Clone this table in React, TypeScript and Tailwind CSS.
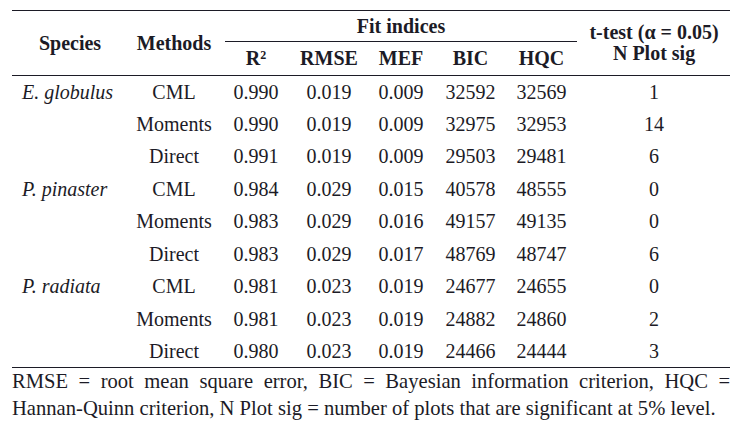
const rows = [
  { species: "E. globulus", method: "CML", r2: "0.990", rmse: "0.019", mef: "0.009", bic: "32592", hqc: "32569", sig: "1" },
  { species: "", method: "Moments", r2: "0.990", rmse: "0.019", mef: "0.009", bic: "32975", hqc: "32953", sig: "14" },
  { species: "", method: "Direct", r2: "0.991", rmse: "0.019", mef: "0.009", bic: "29503", hqc: "29481", sig: "6" },
  { species: "P. pinaster", method: "CML", r2: "0.984", rmse: "0.029", mef: "0.015", bic: "40578", hqc: "48555", sig: "0" },
  { species: "", method: "Moments", r2: "0.983", rmse: "0.029", mef: "0.016", bic: "49157", hqc: "49135", sig: "0" },
  { species: "", method: "Direct", r2: "0.983", rmse: "0.029", mef: "0.017", bic: "48769", hqc: "48747", sig: "6" },
  { species: "P. radiata", method: "CML", r2: "0.981", rmse: "0.023", mef: "0.019", bic: "24677", hqc: "24655", sig: "0" },
  { species: "", method: "Moments", r2: "0.981", rmse: "0.023", mef: "0.019", bic: "24882", hqc: "24860", sig: "2" },
  { species: "", method: "Direct", r2: "0.980", rmse: "0.023", mef: "0.019", bic: "24466", hqc: "24444", sig: "3" },
];

export default function App() {
  return (
    <div className="w-[743px] h-[429px] bg-white text-[#1c1b26] [font-family:'Liberation_Serif','Times_New_Roman',serif] text-[20px] overflow-hidden">
      <div className="ml-[12px] w-[718px] pt-[10px]">
        <table className="w-[718px] table-fixed border-collapse border-t border-b border-[#1c1b26]">
          <colgroup>
            <col className="w-[116px]" />
            <col className="w-[92px]" />
            <col className="w-[72px]" />
            <col className="w-[74px]" />
            <col className="w-[70px]" />
            <col className="w-[69px]" />
            <col className="w-[73px]" />
            <col className="w-[152px]" />
          </colgroup>
          <thead className="font-bold">
            <tr className="h-[31px]">
              <th rowSpan={2} className="p-0 align-middle text-center border-b border-[#1c1b26]">Species</th>
              <th rowSpan={2} className="p-0 align-middle text-center border-b border-[#1c1b26]">Methods</th>
              <th colSpan={5} className="p-0 align-top">
                <div className="ml-[5px] mr-px h-[31px] flex items-center justify-center border-b border-[#1c1b26]">
                  Fit indices
                </div>
              </th>
              <th rowSpan={2} className="p-0 align-middle text-center leading-[21px] border-b border-[#1c1b26]">
                <div>t-test (α = 0.05)</div>
                <div>N Plot sig</div>
              </th>
            </tr>
            <tr className="h-[33px]">
              <th className="p-0 text-center border-b border-[#1c1b26]">
                R<sup className="text-[12px]">2</sup>
              </th>
              <th className="p-0 text-center border-b border-[#1c1b26]">RMSE</th>
              <th className="p-0 text-center border-b border-[#1c1b26]">MEF</th>
              <th className="p-0 text-center border-b border-[#1c1b26]">BIC</th>
              <th className="p-0 text-center border-b border-[#1c1b26]">HQC</th>
            </tr>
          </thead>
          <tbody>
            {rows.map((r, i) => (
              <tr key={i} className="h-[32.5px]">
                <td className="p-0 pl-[10px] italic text-left">{r.species}</td>
                <td className="p-0 text-center">{r.method}</td>
                <td className="p-0 text-center">{r.r2}</td>
                <td className="p-0 text-center">{r.rmse}</td>
                <td className="p-0 text-center">{r.mef}</td>
                <td className="p-0 text-center">{r.bic}</td>
                <td className="p-0 text-center">{r.hqc}</td>
                <td className="p-0 text-center">{r.sig}</td>
              </tr>
            ))}
          </tbody>
        </table>
        <p className="leading-[27px] text-[20.6px]">
          <span className="block text-justify [text-align-last:justify]">
            RMSE = root mean square error, BIC = Bayesian information criterion, HQC =
          </span>
          <span className="block">
            Hannan-Quinn criterion, N Plot sig = number of plots that are significant at 5% level.
          </span>
        </p>
      </div>
    </div>
  );
}
